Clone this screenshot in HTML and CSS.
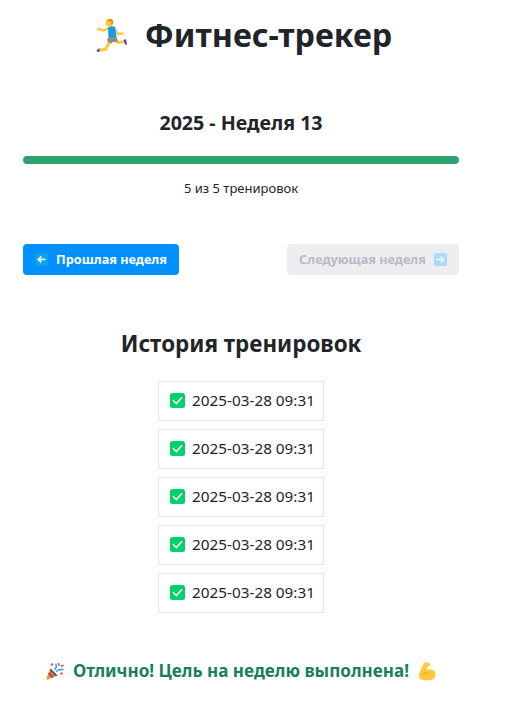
FILE: index.html
```html
<!DOCTYPE html>
<html>

<head>
    <meta charset="utf-8">
    <title>Фитнес-трекер</title>
    <link rel="stylesheet" href="styles.css">
</head>

<body>
    <svg class="icon-defs" width="0" height="0">
        <symbol id="check" viewBox="0 0 15 15">
            <rect width="15" height="15" rx="2.5" fill="#00d26a"/>
            <path d="M3.500 7.800l2.800 2.700 5.200-5.600" fill="none" stroke="#fff" stroke-width="1.700" stroke-linecap="round" stroke-linejoin="round"/>
        </symbol>
    </svg>

    <div class="container">
        <h1 class="title">
            <svg class="runner" viewBox="0 0 35 35">
                <path d="M14 10L9 12.500 3 11" fill="none" stroke="#ffc83d" stroke-width="2.400" stroke-linecap="round" stroke-linejoin="round"/>
                <path d="M19 10l4 6 4.500-.5" fill="none" stroke="#ffc83d" stroke-width="2.400" stroke-linecap="round" stroke-linejoin="round"/>
                <path d="M15 23l-4.500 8.500L4 32" fill="none" stroke="#ffc83d" stroke-width="3" stroke-linejoin="round"/>
                <path d="M19 22l4 2.500 6-1" fill="none" stroke="#ffc83d" stroke-width="3" stroke-linejoin="round"/>
                <path d="M13 10c1-2 5-2.500 7-1l1.500 10.500H13.500z" fill="#0e9de6"/>
                <path d="M13.500 19h8l1.500 4.500-5.500.5-1 1.500-3.500-1.500-1-2z" fill="#8c8c8c"/>
                <path d="M4.500 30v4.200L1 33z" fill="#5c3d99"/>
                <path d="M28.500 21.500h2.500l1 5-2 .3z" fill="#5c3d99"/>
                <circle cx="14" cy="5" r="3.500" fill="#ffc83d"/>
                <path d="M11.500 3C12 .8 15 0 17 1.200c1.500 1 1.600 3.500.8 5.300l-1.400.3-.6-3z" fill="#e8931c"/>
            </svg>
            <span>Фитнес-трекер</span>
        </h1>

        <h2 class="week-title">2025 - Неделя 13</h2>
        <div class="progress"><div class="progress-bar"></div></div>
        <p class="progress-text">5 из 5 тренировок</p>

        <div class="week-nav">
            <button class="btn btn-primary">
                <svg class="arrow" viewBox="0 0 13 13">
                    <rect width="13" height="13" rx="1.500" fill="#0ea2e8"/>
                    <path d="M10.500 6.500H4M6.300 3.700L3.300 6.500l3 2.800" fill="none" stroke="#fff" stroke-width="1.700"/>
                </svg>
                <span>Прошлая неделя</span>
            </button>
            <button class="btn btn-disabled">
                <span>Следующая неделя</span>
                <svg class="arrow" viewBox="0 0 13 13">
                    <rect width="13" height="13" rx="1.500" fill="#abdcf5"/>
                    <path d="M2.500 6.500H9M6.700 3.700l3 2.800-3 2.800" fill="none" stroke="#eef6fb" stroke-width="1.700"/>
                </svg>
            </button>
        </div>

        <h2 class="history-title">История тренировок</h2>
        <ul class="history">
            <li><svg class="check"><use href="#check"/></svg>2025-03-28 09:31</li>
            <li><svg class="check"><use href="#check"/></svg>2025-03-28 09:31</li>
            <li><svg class="check"><use href="#check"/></svg>2025-03-28 09:31</li>
            <li><svg class="check"><use href="#check"/></svg>2025-03-28 09:31</li>
            <li><svg class="check"><use href="#check"/></svg>2025-03-28 09:31</li>
        </ul>

        <p class="goal">
            <svg class="party" viewBox="0 0 18 18">
                <path d="M4.500 6.500l7 7L2 17.600c-1 .4-1.900-.5-1.500-1.500z" fill="#f59f00"/>
                <path d="M3.200 9.800l5 5-2.500 1.100-3.600-3.600z" fill="#a4489c"/>
                <path d="M4.500 6.500l7 7-1.800.8-6-6z" fill="#6b3a8c"/>
                <path d="M8.500 7.500c2-1.300 2.200-3.500 1.300-6M10 9.500c2.500-2 4.500-2.300 7.500-1.800" fill="none" stroke="#1aa3e8" stroke-width="1.500"/>
                <circle cx="6" cy="2.500" r="1.200" fill="#f0436f"/>
                <circle cx="15.500" cy="11.500" r="1.200" fill="#f0436f"/>
                <path d="M12.500 1l.8 3M15 4.500l2.500-1.500" stroke="#f0436f" stroke-width="1.500"/>
            </svg>
            <span>Отлично! Цель на неделю выполнена!</span>
            <svg class="muscle" viewBox="0 0 18 19">
                <path d="M6 1C8-.3 11 .2 12 2c.5 1.500-1 3-3 3l-.5 3c2.500-1.200 7-.8 8.500 2 1.500 3.500-.5 7.500-4 8-4 .8-9 .5-11-1.500C.5 15 .5 12.500 1.500 10.500 3 7.500 4.500 4 6 1z" fill="#ffc83d"/>
                <path d="M5.500 12.500c.5-1.200 1.300-2.200 2.500-2.500 1 .5 1.700 1.500 2 2.800" fill="none" stroke="#e8a01c" stroke-width="1"/>
            </svg>
        </p>
    </div>
</body>

</html>
```

FILE: styles.css
```css
body {
    margin: 0;
    font-family: "Noto Sans", sans-serif;
    color: #212529;
    background: #fff;
}

.icon-defs {
    display: block;
}

.container {
    width: 436px;
    margin-left: 23px;
    text-align: center;
}

.title {
    display: flex;
    justify-content: center;
    align-items: center;
    gap: 15px;
    margin: 0;
    padding: 13px 0 0 5px;
    font-size: 32.200px;
    line-height: 44px;
    font-weight: 700;
}

.runner {
    width: 35px;
    height: 35px;
}

.week-title {
    margin: 0;
    padding-top: 52px;
    font-size: 19.600px;
    line-height: 27px;
    font-weight: 700;
}

.progress {
    margin-top: 20px;
    height: 8px;
    border-radius: 4px;
    background: #e9ecef;
    overflow: hidden;
}

.progress-bar {
    width: 100%;
    height: 100%;
    background: #2fa36f;
}

.progress-text {
    margin: 15px 0 0;
    font-size: 13px;
    line-height: 18px;
}

.week-nav {
    display: flex;
    justify-content: space-between;
    margin-top: 47px;
}

.btn {
    display: flex;
    align-items: center;
    justify-content: center;
    gap: 8px;
    height: 31px;
    padding: 0;
    border: 0;
    border-radius: 4px;
    font-family: inherit;
    font-size: 12.700px;
    font-weight: 700;
}

.btn span {
    padding-bottom: 2px;
}

.arrow {
    width: 13px;
    height: 13px;
}

.btn-primary {
    width: 156px;
    background: #0090ff;
    color: #fff;
}

.btn-disabled {
    width: 172px;
    background: #eeeef1;
    color: #b9bac6;
}

.history-title {
    margin: 0;
    padding-top: 53px;
    font-size: 22.400px;
    line-height: 31px;
    font-weight: 700;
}

.history {
    display: flex;
    flex-direction: column;
    align-items: center;
    gap: 8px;
    margin: 22px 0 0;
    padding: 0;
    list-style: none;
}

.history li {
    display: flex;
    align-items: center;
    justify-content: center;
    gap: 7px;
    width: 166px;
    height: 40px;
    box-sizing: border-box;
    border: 1px solid #e3e6ea;
    padding: 0 0 2px 3px;
    font-size: 15.300px;
    white-space: nowrap;
}

.check {
    width: 15px;
    height: 15px;
}

.goal {
    display: flex;
    justify-content: center;
    align-items: center;
    gap: 9px;
    margin: 0;
    padding-top: 47px;
    font-size: 17.100px;
    line-height: 22px;
    font-weight: 700;
    color: #18805a;
}

.party {
    width: 18px;
    height: 18px;
}

.muscle {
    width: 18px;
    height: 19px;
}
```
